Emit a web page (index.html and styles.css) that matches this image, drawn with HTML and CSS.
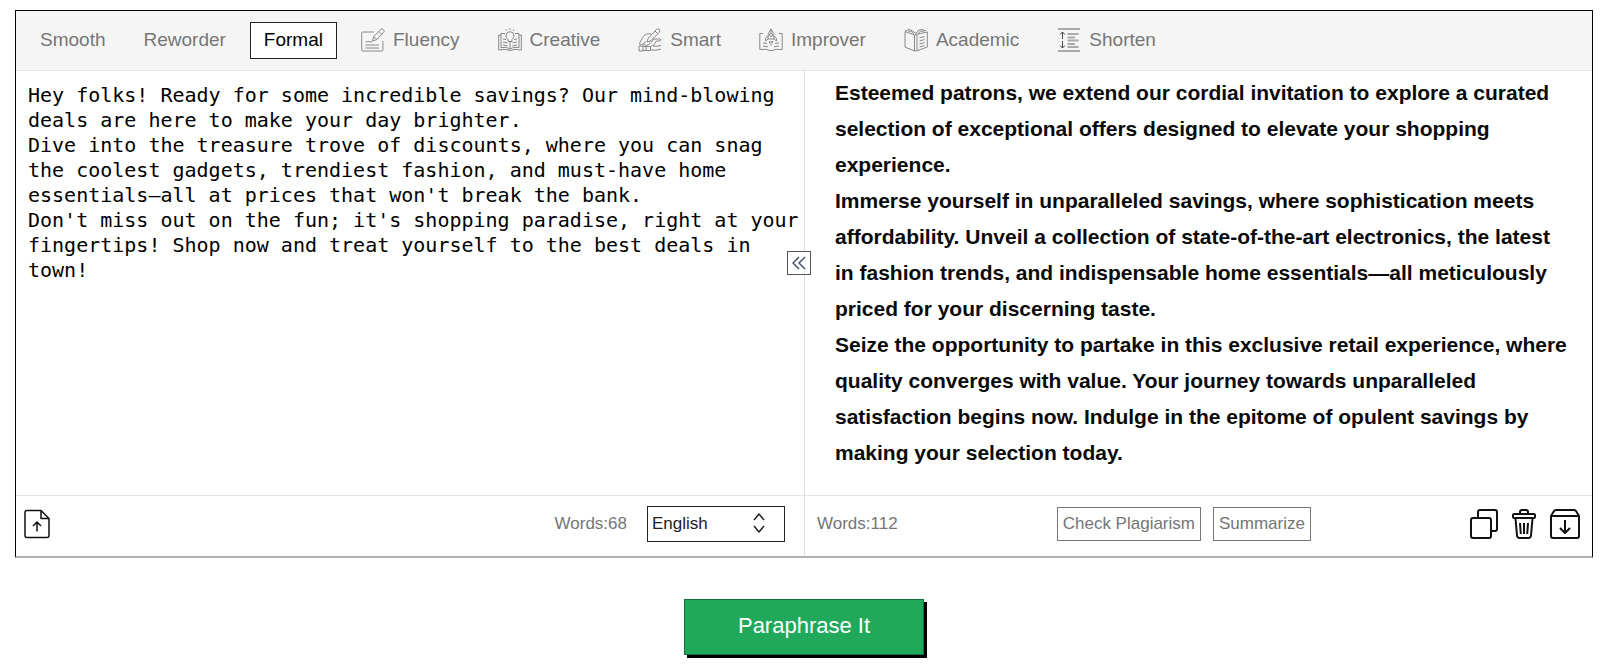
FILE: index.html
```html
<!DOCTYPE html>
<html lang="en">
<head>
  <meta charset="UTF-8">
  <title>Paraphrasing Tool</title>
  <meta name="viewport" content="width=device-width, initial-scale=1">
  <link rel="stylesheet" href="styles.css">
</head>
<body>

  <main class="tool">
    <nav class="modes">
      <button type="button" class="mode">Smooth</button>
      <button type="button" class="mode">Reworder</button>
      <button type="button" class="mode active">Formal</button>
      <button type="button" class="mode">
        <svg viewBox="0 0 24 24"><path d="M13 4H2Q.7 4 .7 5.300v16.500q0 1.200 1.200 1.200h18.800q1.200 0 1.200-1.200V13"/><path d="M11.500 13l1.200-4.500L20 1.300q1-.8 2 0l.8.800q.8 1 0 2L16 11.500zM12.700 8.500l3.300 3M18 3.500l3 3M4.500 14Q8 13 11 14M4.500 17h13.500M4.500 20h13.500"/></svg>
        Fluency
      </button>
      <button type="button" class="mode">
        <svg viewBox="0 0 24 24"><path d="M7 5.500H3v14q6-1 9 1.500 3-2.500 9-1.500v-14h-4M3 7H.7v15q7-1.500 11.300.5 4.300-2 11.300-.5V7H21M12 14v7M10 13.500v-2Q8 10 8 7.700a4 4 0 0 1 8 0q0 2.300-2 3.800v2zM5 11l3 .5M5 14l4.500.8M5 17l4.500.8M19 11l-3 .5M19 14l-4.500.8M19 17l-4.500.8M12 .3v1.700M8 1.300l.9 1.500M16 1.300l-.9 1.500"/></svg>
        Creative
      </button>
      <button type="button" class="mode">
        <svg viewBox="0 0 24 24"><path d="M9 14l1.300-4L18.500 1.500q1.500-1.300 2.800 0 1.200 1.300 0 2.800L13 12.700zM17 3l2.800 2.800M13 6Q8 5 5.500 8.500L2 14q-1 3 1 3.500l5-4M5 16.500q4 2.500 7-1l4-4.500h6q1.500 1 0 2h-3.500L15 18q3 .8 8-.5M12.500 22q5 1 10.500-1M1 18h4v5H1zM5 18.500h7.500v4H5M8 18.500v4M12.500 18.500l2-1"/></svg>
        Smart
      </button>
      <button type="button" class="mode">
        <svg viewBox="0 0 24 24"><path d="M4 5.500H.8v16q7-1 11.200 1.300 4.200-2.300 11.200-1.300v-16H20M9 11Q8 5.500 12 1q4 4.500 3 10zM12 1v4M8.700 8L6.500 10.500V13L9 11M15.300 8l2.200 2.500V13L15 11M10.500 13v2M13.500 13v2M12 13v5M4 15l4 .5M4 18l5 .8M20 15l-4 .5M20 18l-5 .8"/><circle cx="12" cy="7" r="1.500"/></svg>
        Improver
      </button>
      <button type="button" class="mode">
        <svg viewBox="0 0 24 24"><path d="M1 3.500L10.500 7v16L1 19zM10.500 7l2.500-.8v16.500L10.500 23M13 6.200L23.300 4v15L13 22.700M1 3.500Q4 .5 7 2l5 3.500Q14 1 18 1.500l4 1.500M4 3q3-1 6 3.200M14 5.500Q16 2 20 3.300M15.500 10l5-1.500M15.500 13l5-1.500M15.500 16l5-1.500M15.500 19l5-1.500"/></svg>
        Academic
      </button>
      <button type="button" class="mode">
        <svg viewBox="0 0 24 24"><path class="bar" d="M1 1h22M1 23h22M10.500 6h11M10.500 9.500h7.500M10.500 12.500h11M10.500 16h7.500M10.500 19h11"/><path class="dark" d="M5.500 4v7M5.500 13v7M3 6.500L5.500 4 8 6.500M3 17.500L5.500 20 8 17.500"/></svg>
        Shorten
      </button>
    </nav>

    <div class="panes">
      <section class="pane input-pane">
        <textarea class="source" aria-label="Your text" spellcheck="false">Hey folks! Ready for some incredible savings? Our mind-blowing deals are here to make your day brighter.
Dive into the treasure trove of discounts, where you can snag the coolest gadgets, trendiest fashion, and must-have home essentials—all at prices that won't break the bank.
Don't miss out on the fun; it's shopping paradise, right at your fingertips! Shop now and treat yourself to the best deals in town!</textarea>
        <div class="bar-bottom">
          <button type="button" class="icon-btn" aria-label="Upload file">
            <svg width="26" height="30" viewBox="0 0 26 30"><path d="M17 1.500H3Q1 1.500 1 3.500v23q0 2 2 2h20q2 0 2-2v-17zM17 1.500v8h8M13 22.500V13M9 17l4-4 4 4"/></svg>
          </button>
          <span class="words push">Words:68</span>
          <div class="language">
            <select aria-label="Language">
              <option>English</option>
              <option>Spanish</option>
              <option>French</option>
            </select>
            <svg width="12" height="20" viewBox="0 0 12 20"><path d="M1 7l5-6 5 6M1 13l5 6 5-6"/></svg>
          </div>
        </div>
        <button type="button" class="collapse" aria-label="Collapse">
          <svg width="14" height="14" viewBox="0 0 14 14"><path d="M7 1L1 7l6 6M13 1L7 7l6 6"/></svg>
        </button>
      </section>

      <section class="pane output-pane">
        <div class="result">
          <p>Esteemed patrons, we extend our cordial invitation to explore a curated selection of exceptional offers designed to elevate your shopping experience.</p>
          <p>Immerse yourself in unparalleled savings, where sophistication meets affordability. Unveil a collection of state-of-the-art electronics, the latest<br> in fashion trends, and indispensable home essentials—all meticulously priced for your discerning taste.</p>
          <p>Seize the opportunity to partake in this exclusive retail experience, where quality converges with value. Your journey towards unparalleled<br> satisfaction begins now. Indulge in the epitome of opulent savings by making your selection today.</p>
        </div>
        <div class="bar-bottom spread">
          <span class="words">Words:112</span>
          <div class="actions">
            <button type="button" class="action">Check Plagiarism</button>
            <button type="button" class="action">Summarize</button>
          </div>
          <div class="icons">
            <button type="button" class="icon-btn" aria-label="Copy">
              <svg width="28" height="30" viewBox="0 0 28 30"><path d="M8 9V3q0-2 2-2h15q2 0 2 2v17q0 2-2 2h-4"/><rect x="1" y="9" width="20" height="20" rx="2"/></svg>
            </button>
            <button type="button" class="icon-btn" aria-label="Delete">
              <svg width="24" height="30" viewBox="0 0 24 30"><path d="M3.500 9.500l1.500 17Q5.300 29 7.500 29h9q2.200 0 2.500-2.500l1.500-17M8 5V3q0-2 2-2h4q2 0 2 2v2M8 14l.8 11M12 14v11M16 14l-.8 11"/><rect x="1" y="5" width="22" height="4" rx="1"/></svg>
            </button>
            <button type="button" class="icon-btn" aria-label="Download">
              <svg width="30" height="30" viewBox="0 0 30 30"><path d="M1 7l3-5q.5-1 2-1h18q1.500 0 2 1l3 5v20q0 2-2 2H3q-2 0-2-2zM1 7h28M15 11v13M10 19l5 5 5-5"/></svg>
            </button>
          </div>
        </div>
      </section>
    </div>
  </main>

  <button type="button" class="submit">Paraphrase It</button>

</body>
</html>
```
FILE: styles.css
```css
* {
  box-sizing: border-box;
}

body {
  margin: 0;
  padding: 10px 7px 16px 15px;
  font-family: "Liberation Sans", Arial, sans-serif;
  background: #fff;
  color: #000;
}

button {
  font-family: inherit;
  cursor: pointer;
}

svg {
  display: block;
  fill: none;
  stroke: currentColor;
  stroke-width: 2;
  stroke-linejoin: round;
}

.tool {
  border: 1px solid #000;
  border-bottom: 2px solid #b0b0b0;
}

.modes {
  display: flex;
  flex-wrap: wrap;
  gap: 10px;
  padding: 11px 10px;
  background: #f5f5f5;
  border-bottom: 1px solid #e6e6e6;
}

.mode {
  display: flex;
  align-items: center;
  gap: 8px;
  height: 37px;
  padding: 0 13px 2px;
  font-size: 19px;
  color: #757575;
  background: none;
  border: 1px solid transparent;
}

.mode.active {
  color: #000;
  background: #fff;
  border-color: #222;
}

.mode svg {
  width: 24px;
  height: 24px;
  stroke: #888;
  stroke-width: 1;
}

.mode .bar {
  stroke: #aaa;
  stroke-width: 2;
}

.mode .dark {
  stroke: #444;
}

.panes {
  display: grid;
  grid-template-columns: 1fr 1fr;
}

.pane {
  display: flex;
  flex-direction: column;
  min-width: 0;
}

.input-pane {
  position: relative;
}

.output-pane {
  border-left: 1px solid #dcdfe2;
}

.source {
  flex: 1;
  width: 100%;
  padding: 12px 4px 12px 12px;
  border: none;
  outline: none;
  resize: none;
  font-family: "DejaVu Sans Mono", monospace;
  font-size: 20px;
  line-height: 25px;
  color: #000;
  background: #fff;
}

.result {
  flex: 1;
  padding: 4px 4px 24px 30px;
  font-size: 21px;
  font-weight: bold;
  line-height: 36px;
  color: #0a0a0a;
}

.result p {
  margin: 0;
}

.bar-bottom {
  display: flex;
  align-items: center;
  height: 61px;
  padding: 0 19px 4px 8px;
  border-top: 1px solid #e3e5e6;
}

.bar-bottom.spread {
  justify-content: space-between;
  padding: 0 12px 4px 12px;
}

.words {
  font-size: 17px;
  color: #757575;
}

.push {
  margin-left: auto;
}

.language {
  position: relative;
  width: 138px;
  margin-left: 20px;
}

.language select {
  appearance: none;
  width: 100%;
  height: 36px;
  padding: 0 4px 2px;
  border: 1px solid #222;
  border-radius: 0;
  background: #fff;
  font-family: inherit;
  font-size: 17px;
  color: #222;
}

.language svg {
  position: absolute;
  top: 7px;
  right: 20px;
  color: #222;
  stroke-width: 1.5;
  pointer-events: none;
}

.icon-btn {
  padding: 0;
  border: none;
  background: none;
  color: #111;
}

.input-pane .icon-btn svg {
  stroke-width: 1.5;
}

.collapse {
  position: absolute;
  top: 180px;
  right: -7px;
  display: flex;
  align-items: center;
  justify-content: center;
  width: 24px;
  height: 24px;
  padding: 0;
  border: 1px solid #555;
  background: #fff;
  color: #4a5568;
}

.collapse svg {
  stroke-width: 1.5;
}

.actions {
  display: flex;
  gap: 12px;
}

.action {
  height: 34px;
  padding: 0 5px;
  border: 1px solid #777;
  background: #fff;
  font-size: 17px;
  color: #757575;
}

.icons {
  display: flex;
  gap: 14px;
}

.submit {
  display: block;
  width: 240px;
  height: 56px;
  margin: 41px auto 0;
  padding: 0 0 2px;
  border: 1px solid #14703a;
  background: #20a95a;
  box-shadow: 3px 3px 0 #000;
  font-size: 22px;
  color: #fff;
}
```
